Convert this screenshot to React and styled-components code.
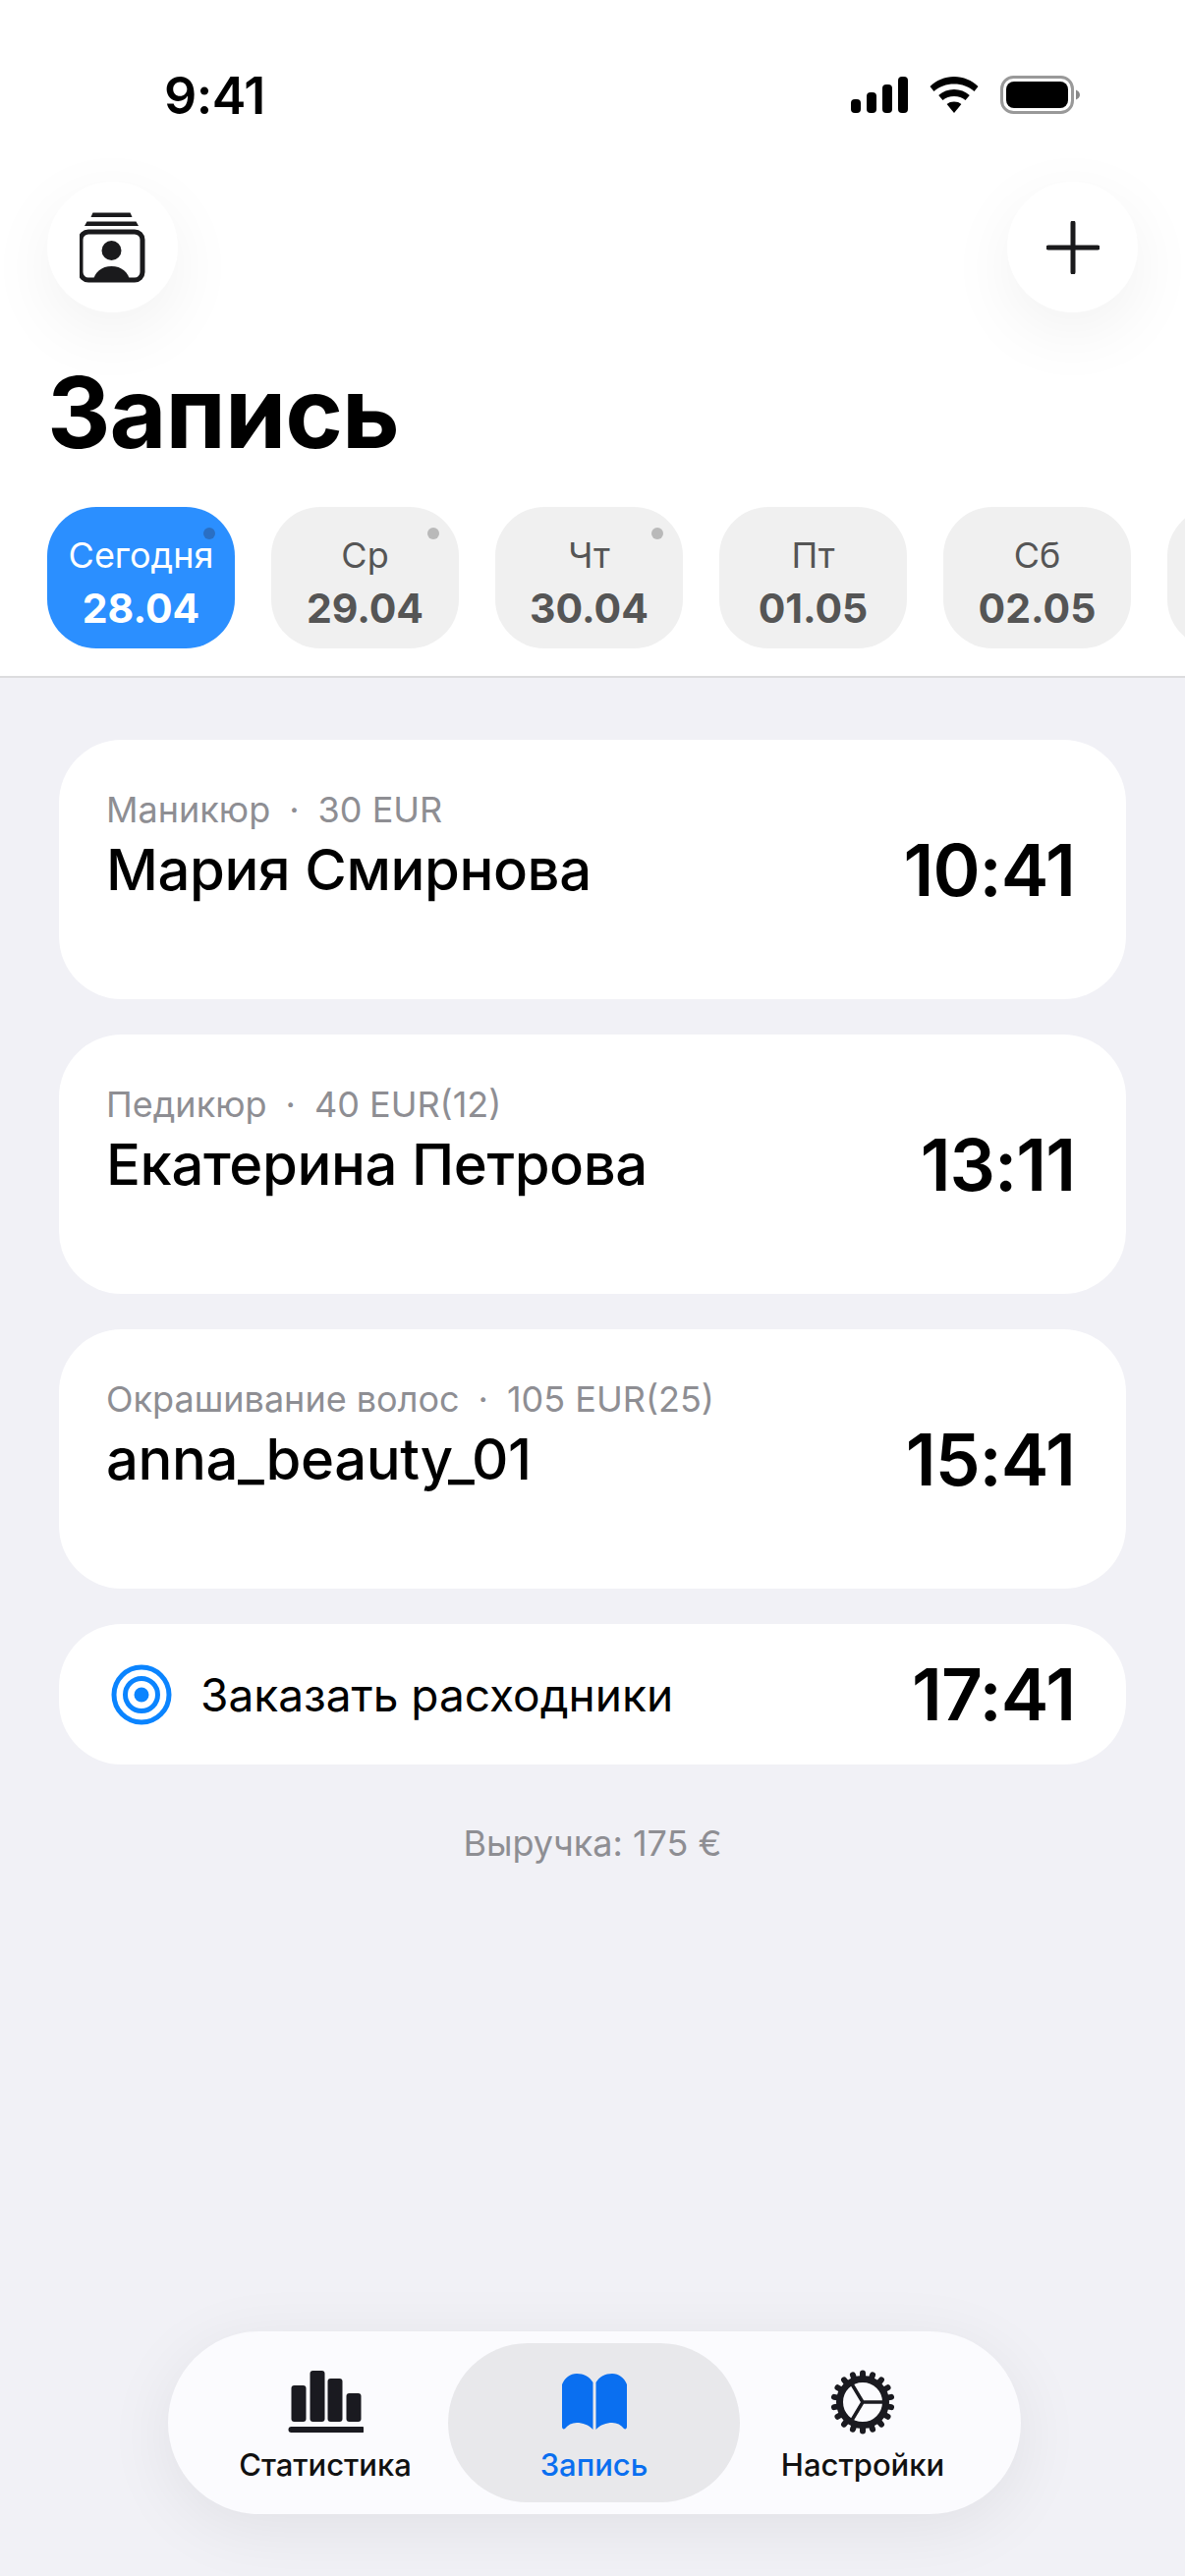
import React from "react";
import styled, { createGlobalStyle } from "styled-components";

const GlobalStyle = createGlobalStyle`
  html, body {
    margin: 0;
    padding: 0;
    background: #f1f1f6;
    font-family: Inter, "Noto Sans", sans-serif;
    -webkit-font-smoothing: antialiased;
  }
`;

const Page = styled.div`
  width: 1206px;
  height: 2622px;
  display: flex;
  flex-direction: column;
  overflow: hidden;
  background: #f1f1f6;
`;

const Header = styled.header`
  background: #fff;
  border-bottom: 2px solid #dcdcde;
  height: 690px;
  box-sizing: border-box;
  display: flex;
  flex-direction: column;
`;

const StatusBar = styled.div`
  height: 185px;
  flex-shrink: 0;
  display: flex;
  justify-content: space-between;
  align-items: flex-start;
  padding: 71px 106px 0 167px;
  box-sizing: border-box;
`;

const Clock = styled.div`
  font-size: 52px;
  line-height: 54px;
  font-weight: 600;
  color: #000;
  letter-spacing: -0.5px;
`;

const StatusIcons = styled.div`
  display: flex;
  align-items: center;
  gap: 22px;
  padding-top: 6px;
`;

const TopActions = styled.div`
  display: flex;
  justify-content: space-between;
  padding: 0 48px;
`;

const RoundButton = styled.button`
  width: 133px;
  height: 133px;
  border: none;
  padding: 0;
  border-radius: 50%;
  background: #fff;
  box-shadow: 0 20px 70px rgba(0, 0, 0, 0.06);
  display: flex;
  align-items: center;
  justify-content: center;
`;

const Title = styled.h1`
  margin: 44px 0 0 48px;
  font-size: 100px;
  line-height: 116px;
  font-weight: 700;
  letter-spacing: -1px;
  color: #000;
`;

const DayRow = styled.div`
  display: flex;
  gap: 37px;
  padding: 0 0 0 48px;
  margin-top: 38px;
  overflow: hidden;
`;

const DayChip = styled.div`
  position: relative;
  flex: 0 0 191px;
  height: 144px;
  box-sizing: border-box;
  padding-top: 10px;
  border-radius: 50px;
  background: ${({ $active }) => ($active ? "#2b8fff" : "#f0f0f0")};
  color: ${({ $active }) => ($active ? "#fff" : "#555")};
  display: flex;
  flex-direction: column;
  align-items: center;
  justify-content: center;
  gap: 9px;
`;

const DayDot = styled.span`
  position: absolute;
  top: 21px;
  right: 20px;
  width: 12px;
  height: 12px;
  border-radius: 50%;
  background: ${({ $active }) => ($active ? "#2a6fc4" : "#b9b9b9")};
`;

const DayName = styled.div`
  font-size: 36px;
  line-height: 42px;
  font-weight: 400;
`;

const DayDate = styled.div`
  font-size: 41px;
  line-height: 48px;
  font-weight: 700;
`;

const Schedule = styled.main`
  flex: 1;
  display: flex;
  flex-direction: column;
  gap: 36px;
  padding: 63px 60px 0;
`;

const Card = styled.article`
  height: 264px;
  box-sizing: border-box;
  border-radius: 64px;
  background: #fff;
  padding: 49px 52px 0 48px;
  display: flex;
  justify-content: space-between;
  align-items: flex-start;
`;

const CardInfo = styled.div`
  display: flex;
  flex-direction: column;
  gap: 3px;
`;

const Service = styled.div`
  font-size: 36px;
  line-height: 44px;
  color: #8e8e93;
  display: flex;
  gap: 19px;
`;

const ClientName = styled.div`
  font-size: 58px;
  line-height: 72px;
  font-weight: 500;
  color: #000;
  letter-spacing: -0.4px;
`;

const Time = styled.div`
  font-size: 73px;
  line-height: 84px;
  font-weight: 600;
  color: #000;
  letter-spacing: -1px;
  margin-top: ${({ $inline }) => ($inline ? 0 : "42px")};
`;

const TaskCard = styled.article`
  height: 143px;
  box-sizing: border-box;
  border-radius: 64px;
  background: #fff;
  padding: 0 52px 0 53px;
  display: flex;
  align-items: center;
  gap: 29px;
`;

const TaskTitle = styled.div`
  flex: 1;
  font-size: 46px;
  line-height: 56px;
  color: #000;
`;

const Revenue = styled.div`
  margin-top: 22px;
  text-align: center;
  font-size: 36px;
  line-height: 44px;
  color: #8e8e93;
`;

const TabBar = styled.nav`
  align-self: center;
  margin: 0 0 63px 4px;
  width: 868px;
  height: 186px;
  box-sizing: border-box;
  padding: 12px 36px 12px 35px;
  border-radius: 93px;
  background: #fbfbfe;
  box-shadow: 0 14px 70px rgba(0, 0, 0, 0.07);
  display: grid;
  grid-template-columns: 250px 297px 250px;
`;

const Tab = styled.div`
  border-radius: 81px;
  background: ${({ $active }) => ($active ? "#e8e8eb" : "transparent")};
  color: ${({ $active }) => ($active ? "#0a6ff0" : "#111")};
  display: flex;
  flex-direction: column;
  align-items: center;
  padding-top: 28px;
  box-sizing: border-box;
`;

const TabIconSlot = styled.div`
  height: 64px;
  display: flex;
  align-items: center;
  justify-content: center;
`;

const TabLabel = styled.div`
  margin-top: 14px;
  font-size: 31px;
  line-height: 36px;
  font-weight: 500;
  white-space: nowrap;
`;

const SignalIcon = () => (
  <svg width="58" height="37" viewBox="0 0 58 37" fill="#000">
    <rect x="0" y="23" width="10" height="14" rx="4" />
    <rect x="16" y="16" width="10" height="21" rx="4" />
    <rect x="32" y="8" width="10" height="29" rx="4" />
    <rect x="48" y="0" width="10" height="37" rx="4" />
  </svg>
);

const WifiIcon = () => (
  <svg width="50" height="37" viewBox="0 0 50 37" fill="#000">
    <path d="M25 0C15.500 0 7 3.700 0.500 10L4.500 15C10 10 17 7.500 25 7.500S40 10 45.500 15L49.500 10C43 3.700 34.500 0 25 0Z" />
    <path d="M25 13C19 13 13.500 15.200 9.200 19L13.500 24C16.500 21.500 20.500 20 25 20S33.500 21.500 36.500 24L40.800 19C36.500 15.200 31 13 25 13Z" />
    <path d="M25 25.500C22 25.500 19.600 26.300 17.600 28L25 37L32.400 28C30.400 26.300 28 25.500 25 25.500Z" />
  </svg>
);

const BatteryIcon = () => (
  <svg width="82" height="39" viewBox="0 0 82 39">
    <rect x="1.500" y="1.500" width="72" height="36" rx="12" fill="none" stroke="#999" strokeWidth="3" />
    <rect x="6" y="6" width="63" height="27" rx="8" fill="#000" />
    <path d="M77 14.500C79.500 15.500 81 17.300 81 19.500S79.500 23.500 77 24.500Z" fill="#888" />
  </svg>
);

const ContactsIcon = () => (
  <svg width="68" height="74" viewBox="1.500 0 68 74" fill="#1a1a1c">
    <path d="M15 1.500H53L55 6H13Z" />
    <path d="M9 10.500H59L61.500 15H6.500Z" />
    <rect x="2.500" y="21" width="63" height="49" rx="8" fill="none" stroke="#1a1a1c" strokeWidth="5" />
    <circle cx="34" cy="40" r="10" />
    <path d="M15 72C16.500 62 24 56 34 56S51.500 62 53 72Z" />
  </svg>
);

const PlusIcon = () => (
  <svg width="54" height="54" viewBox="0 0 54 54" stroke="#1a1a1c" strokeWidth="5" strokeLinecap="round">
    <path d="M27 2V52M2 27H52" />
  </svg>
);

const TargetIcon = () => (
  <svg width="62" height="62" viewBox="0 0 62 62" fill="none" stroke="#0a84ff" strokeWidth="5">
    <circle cx="31" cy="31" r="28" />
    <circle cx="31" cy="31" r="16.500" />
    <circle cx="31" cy="31" r="7.500" fill="#0a84ff" stroke="none" />
  </svg>
);

const StatsIcon = () => (
  <svg width="78" height="64" viewBox="-1.500 0 78 64" fill="#1a1a20">
    <rect x="3" y="15" width="15" height="37" rx="3" />
    <rect x="22" y="0" width="15" height="52" rx="3" />
    <rect x="40" y="8" width="15" height="44" rx="3" />
    <rect x="59" y="23" width="15" height="29" rx="3" />
    <rect x="0" y="57" width="78" height="6" rx="3" />
  </svg>
);

const BookIcon = () => (
  <svg width="66" height="58" viewBox="0 0 66 58" fill="#0a6ff0">
    <path d="M0 11C3 4 8 0 15 0C22 0 28 3 31.500 9V57C27 52 21 50 15 50C10 50 6 52 3 56C1.500 57 0 56 0 54Z" />
    <path d="M66 11C63 4 58 0 51 0C44 0 38 3 34.500 9V57C39 52 45 50 51 50C56 50 60 52 63 56C64.500 57 66 56 66 54Z" />
  </svg>
);

// 18 teeth around a ring, with three spokes from the hub
const GearIcon = () => {
  const teeth = Array.from({ length: 18 }, (_, i) => i * 20);
  return (
    <svg width="66" height="66" viewBox="0 0 66 66">
      {teeth.map((deg) => (
        <rect key={deg} x="30" y="0.500" width="6" height="12" rx="3" fill="#1a1a20" transform={`rotate(${deg} 33 33)`} />
      ))}
      <circle cx="33" cy="33" r="23.500" fill="none" stroke="#1a1a20" strokeWidth="7" />
      <g stroke="#1a1a20" strokeWidth="3.500">
        <path d="M33 33H56M33 33L21 13M33 33L21 53" />
      </g>
    </svg>
  );
};

const days = [
  { name: "Сегодня", date: "28.04", active: true, dot: true },
  { name: "Ср", date: "29.04", dot: true },
  { name: "Чт", date: "30.04", dot: true },
  { name: "Пт", date: "01.05" },
  { name: "Сб", date: "02.05" },
  {},
];

const appointments = [
  { service: "Маникюр", price: "30 EUR", client: "Мария Смирнова", time: "10:41" },
  { service: "Педикюр", price: "40 EUR(12)", client: "Екатерина Петрова", time: "13:11" },
  { service: "Окрашивание волос", price: "105 EUR(25)", client: "anna_beauty_01", time: "15:41" },
];

export default function App() {
  return (
    <Page>
      <GlobalStyle />
      <Header>
        <StatusBar>
          <Clock>9:41</Clock>
          <StatusIcons>
            <SignalIcon />
            <WifiIcon />
            <BatteryIcon />
          </StatusIcons>
        </StatusBar>
        <TopActions>
          <RoundButton>
            <ContactsIcon />
          </RoundButton>
          <RoundButton>
            <PlusIcon />
          </RoundButton>
        </TopActions>
        <Title>Запись</Title>
        <DayRow>
          {days.map((day, i) => (
            <DayChip key={i} $active={day.active}>
              {day.dot && <DayDot $active={day.active} />}
              <DayName>{day.name}</DayName>
              <DayDate>{day.date}</DayDate>
            </DayChip>
          ))}
        </DayRow>
      </Header>

      <Schedule>
        {appointments.map((item) => (
          <Card key={item.time}>
            <CardInfo>
              <Service>
                <span>{item.service}</span>
                <span>·</span>
                <span>{item.price}</span>
              </Service>
              <ClientName>{item.client}</ClientName>
            </CardInfo>
            <Time>{item.time}</Time>
          </Card>
        ))}
        <TaskCard>
          <TargetIcon />
          <TaskTitle>Заказать расходники</TaskTitle>
          <Time $inline>17:41</Time>
        </TaskCard>
        <Revenue>Выручка: 175 €</Revenue>
      </Schedule>

      <TabBar>
        <Tab>
          <TabIconSlot>
            <StatsIcon />
          </TabIconSlot>
          <TabLabel>Статистика</TabLabel>
        </Tab>
        <Tab $active>
          <TabIconSlot>
            <BookIcon />
          </TabIconSlot>
          <TabLabel>Запись</TabLabel>
        </Tab>
        <Tab>
          <TabIconSlot>
            <GearIcon />
          </TabIconSlot>
          <TabLabel>Настройки</TabLabel>
        </Tab>
      </TabBar>
    </Page>
  );
}
